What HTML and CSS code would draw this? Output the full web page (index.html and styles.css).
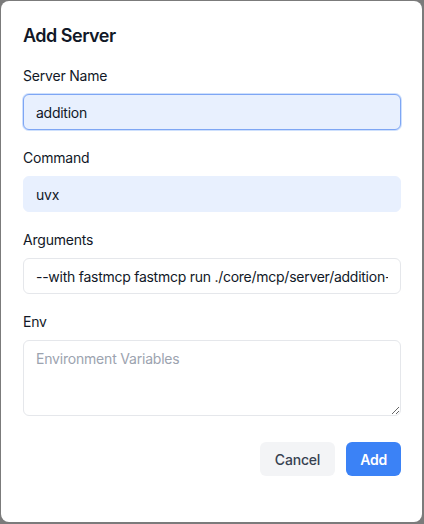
FILE: index.html
```html
<!DOCTYPE html>
<html>
<head>
<meta charset="utf-8">
<link rel="stylesheet" href="styles.css">
</head>
<body>
<div class="dialog">
  <h2 class="title">Add Server</h2>
  <div class="field">
    <label class="label">Server Name</label>
    <input class="input autofill focused" type="text" value="addition">
  </div>
  <div class="field">
    <label class="label">Command</label>
    <input class="input autofill" type="text" value="uvx">
  </div>
  <div class="field">
    <label class="label">Arguments</label>
    <input class="input" type="text" value="--with fastmcp fastmcp run ./core/mcp/server/addition-only.py">
  </div>
  <div class="field">
    <label class="label">Env</label>
    <textarea class="textarea" placeholder="Environment Variables"></textarea>
  </div>
  <div class="actions">
    <button class="btn btn-cancel">Cancel</button>
    <button class="btn btn-add">Add</button>
  </div>
</div>
</body>
</html>
```
FILE: styles.css
```css
* { box-sizing: border-box; }
html, body { height: 100%; }
body {
  margin: 0;
  padding: 1px 2px 2px 1px;
  background: #7b7b7b;
  font-family: Inter, "Noto Sans", sans-serif;
}
.dialog {
  height: 100%;
  background: #fff;
  border-radius: 8px;
  padding: 21px 21px 0 22px;
  display: flex;
  flex-direction: column;
}
.title {
  margin: 0 0 16px;
  font-size: 18px;
  line-height: 28px;
  font-weight: 600;
  letter-spacing: -0.5px;
  color: #111827;
}
.field {
  display: flex;
  flex-direction: column;
  gap: 8px;
  margin-bottom: 18px;
}
.label {
  font-size: 14px;
  line-height: 20px;
  font-weight: 400;
  letter-spacing: -0.2px;
  color: #111827;
}
.input {
  height: 36px;
  width: 100%;
  border: 1px solid #e5e7eb;
  border-radius: 6px;
  padding: 0 12px;
  font-family: inherit;
  font-size: 14px;
  letter-spacing: -0.26px;
  color: #111827;
  background: #fff;
  outline: none;
}
.input.autofill {
  background: #e8f0fe;
  border-color: #e8f0fe;
}
.input.focused {
  border-color: #7ea6f4;
  box-shadow: 0 0 0 1px rgba(59,130,246,0.25);
}
.textarea {
  height: 76px;
  width: 100%;
  border: 1px solid #e5e7eb;
  border-radius: 6px;
  padding: 8px 12px;
  font-family: inherit;
  font-size: 14px;
  line-height: 20px;
  letter-spacing: -0.2px;
  color: #111827;
  outline: none;
  resize: vertical;
}
.textarea::placeholder { color: #9ca3af; }
.actions {
  display: flex;
  justify-content: flex-end;
  gap: 11px;
  margin-top: 8px;
}
.btn {
  height: 34px;
  padding: 0 14px;
  border: none;
  border-radius: 6px;
  font-family: inherit;
  font-size: 14px;
  font-weight: 500;
  letter-spacing: -0.2px;
}
.btn-cancel {
  background: #f3f4f6;
  color: #374151;
  padding: 0 15px;
}
.btn-add {
  background: #3b82f6;
  color: #fff;
  font-weight: 600;
}
```
